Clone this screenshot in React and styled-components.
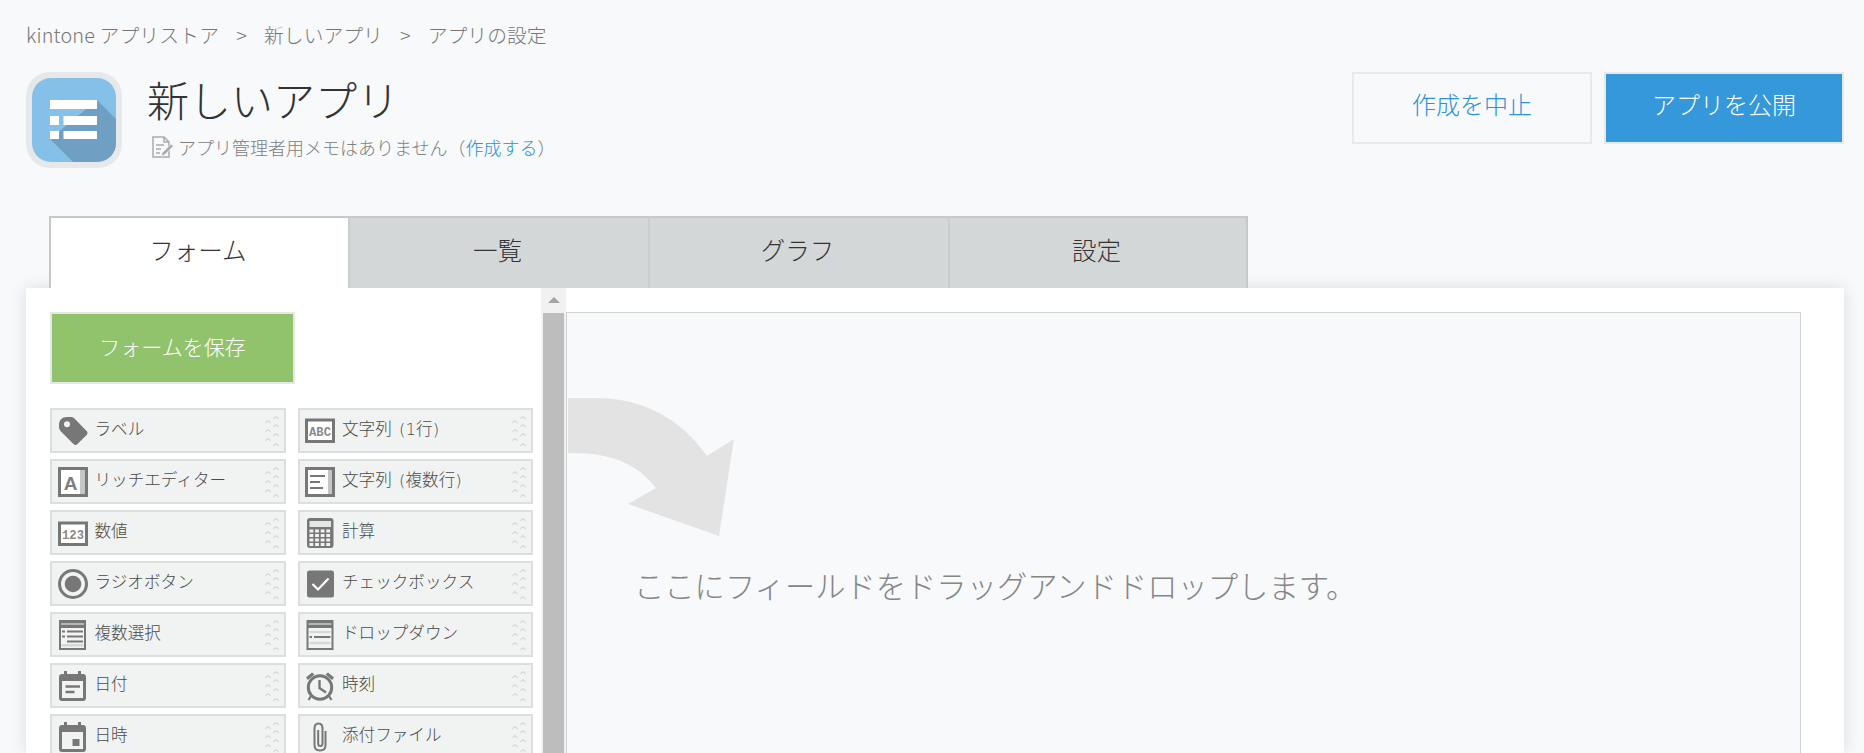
import React from 'react';
import styled, { createGlobalStyle } from 'styled-components';

const GlobalStyle = createGlobalStyle`
  html, body {
    margin: 0;
    height: 100%;
    overflow: hidden;
    background: #f7f9fb;
  }
  body {
    font-family: "Noto Sans CJK JP", "Noto Sans", sans-serif;
    font-weight: 300;
    color: #333;
  }
  * {
    box-sizing: border-box;
  }
`;

const Page = styled.div`
  height: 753px;
  overflow: hidden;
  padding: 21px 20px 0 26px;
  display: flex;
  flex-direction: column;
`;

const Breadcrumb = styled.div`
  display: flex;
  align-items: center;
  height: 28px;
  font-size: 19.8px;
  line-height: 28px;
  color: #777;
`;

const Crumb = styled.span`
  letter-spacing: ${(props) => (props.first ? '0.15px' : '0')};
`;

const Separator = styled.span`
  width: 45px;
  text-align: center;
  font-size: 19.8px;
`;

const Header = styled.header`
  display: flex;
  align-items: flex-start;
  height: 96px;
  margin-top: 23px;
`;

const AppIconFrame = styled.div`
  width: 96px;
  height: 96px;
  flex: none;
  padding: 6px;
  background: #e6e8e9;
  border-radius: 24px;
`;

const AppIconImage = styled.svg`
  display: block;
  width: 84px;
  height: 84px;
  border-radius: 19px;
`;

const TitleBlock = styled.div`
  margin-left: 25px;
  flex: 1;
`;

const Title = styled.h1`
  margin: 0;
  height: 54px;
  font-size: 42px;
  line-height: 54px;
  font-weight: 300;
  color: #333;
`;

const Memo = styled.div`
  display: flex;
  align-items: center;
  height: 24px;
  margin-top: 9px;
  margin-left: 5px;
  font-size: 18px;
  line-height: 24px;
  color: #808080;
`;

const MemoIcon = styled.svg`
  width: 22px;
  height: 22px;
  margin-right: 4px;
  flex: none;
`;

const MemoLink = styled.a`
  color: #2f91d6;
`;

const Actions = styled.div`
  display: flex;
  gap: 12px;
`;

const ActionButton = styled.button`
  width: 240px;
  height: 72px;
  padding: 0 0 9px;
  border: 2px solid #e6e9ea;
  font-family: inherit;
  font-weight: 300;
  font-size: 24px;
  color: ${(props) => (props.primary ? '#fff' : '#2f91d6')};
  background: ${(props) => (props.primary ? '#3498db' : '#f7f9fb')};
`;

const Tabs = styled.nav`
  display: flex;
  position: relative;
  z-index: 1;
  height: 72px;
  margin-top: 48px;
  padding-left: 23px;
`;

const Tab = styled.div`
  width: ${(props) => (props.active ? '299px' : '300px')};
  height: 72px;
  display: flex;
  align-items: center;
  justify-content: center;
  padding: 0 3px 7px 0;
  font-size: 24.5px;
  color: #333;
  border-top: 2px solid #c5c9ca;
  border-left: 2px solid ${(props) => (props.active ? '#c5c9ca' : '#c9cdce')};
  border-right: ${(props) => (props.last ? '2px solid #c5c9ca' : 'none')};
  background: ${(props) => (props.active ? '#fff' : '#d3d7d8')};
`;

const Panel = styled.main`
  flex: 1;
  min-height: 0;
  display: flex;
  overflow: hidden;
  background: #fff;
  box-shadow: 0 0 16px rgba(0, 0, 0, 0.12);
`;

const Sidebar = styled.aside`
  width: 515px;
  flex: none;
  padding: 24px 0 0 24px;
`;

const SaveButton = styled.button`
  display: block;
  width: 245px;
  height: 72px;
  padding: 0 0 4px;
  border: 2px solid #e3e7e8;
  background: #91c36c;
  color: #fff;
  font-family: inherit;
  font-weight: 300;
  font-size: 21px;
`;

const FieldGrid = styled.div`
  display: grid;
  grid-template-columns: 235.5px 235.5px;
  grid-auto-rows: 45px;
  column-gap: 12px;
  row-gap: 6px;
  margin-top: 24px;
`;

const Field = styled.div`
  display: flex;
  align-items: center;
  padding: 0 5px 0 5.5px;
  border: 2px solid #dcdfdf;
  background: #f1f3f2;
`;

const FieldIcon = styled.svg`
  width: 30px;
  height: 30px;
  flex: none;
  margin-right: 7px;
  overflow: visible;
`;

const FieldName = styled.span`
  flex: 1;
  padding-bottom: 2px;
  font-family: "DejaVu Sans", "Noto Sans CJK JP", sans-serif;
  font-size: 16.6px;
  line-height: 24px;
  word-spacing: 2px;
  color: #4a4a4a;
  white-space: nowrap;
`;

const GripIcon = styled.svg`
  width: 14px;
  height: 33px;
  flex: none;
`;

const Scrollbar = styled.div`
  width: 25px;
  flex: none;
  display: flex;
  flex-direction: column;
  background: #f1f1f1;
`;

const ScrollUp = styled.div`
  height: 24px;
  flex: none;
  display: flex;
  align-items: center;
  justify-content: center;
  &::before {
    content: '';
    border-left: 6px solid transparent;
    border-right: 6px solid transparent;
    border-bottom: 6px solid #a3a3a3;
  }
`;

const ScrollThumb = styled.div`
  flex: 1;
  margin: 1px 2px 0;
  background: #bdbdbd;
`;

const DropColumn = styled.div`
  flex: 1;
  min-width: 0;
  padding: 24px 43px 0 0;
`;

const DropArea = styled.section`
  height: 100%;
  border: 1px solid #d0d4d5;
  border-bottom: none;
  background: #f7f9fb;
  padding: 85px 0 0 1px;
`;

const DropArrow = styled.svg`
  display: block;
  width: 170px;
  height: 142px;
`;

const DropHint = styled.p`
  margin: 25px 0 0 66px;
  font-size: 30.3px;
  line-height: 40px;
  color: #858585;
  white-space: nowrap;
`;

const GRAY = '#777';

const icons = {
  label: (
    <path
      fill={GRAY}
      fillRule="evenodd"
      d="M1 9C1 4 4 1 9 1L13 1C14.5 1 15.5 1.6 16.5 2.6L28.6 15C29.8 16.2 29.8 17.8 28.6 19L19.5 28C18.3 29.2 16.7 29.2 15.5 28L3 15.5C1.8 14.2 1 12.5 1 11ZM9 5.2A3 3 0 1 0 9 11.2A3 3 0 1 0 9 5.2Z"
    />
  ),
  richText: (
    <>
      <rect x="1.5" y="1.5" width="27" height="27" fill="#fff" stroke={GRAY} strokeWidth="3" />
      <rect x="22" y="3" width="5" height="24" fill="#c4c6c6" />
      <text x="12.5" y="22.5" textAnchor="middle" fontFamily="Liberation Sans" fontWeight="700" fontSize="19" fill="#808080">A</text>
    </>
  ),
  text: (
    <>
      <rect x="1.5" y="4" width="27" height="21.5" fill="#fff" stroke={GRAY} strokeWidth="3" />
      <text x="15" y="20" textAnchor="middle" fontFamily="Liberation Mono" fontWeight="700" fontSize="13" textLength="22" lengthAdjust="spacingAndGlyphs" fill="#8a8a8a">ABC</text>
    </>
  ),
  multiline: (
    <>
      <rect x="1.5" y="1.5" width="27" height="27" fill="#fff" stroke={GRAY} strokeWidth="3" />
      <rect x="23" y="3" width="4" height="24" fill="#c4c6c6" />
      <path d="M5 9H20M5 15H15M5 21H18" stroke={GRAY} strokeWidth="2.2" />
    </>
  ),
  number: (
    <>
      <rect x="1.5" y="5" width="27" height="21.5" fill="#fff" stroke={GRAY} strokeWidth="3" />
      <text x="15" y="21" textAnchor="middle" fontFamily="Liberation Mono" fontWeight="700" fontSize="13" textLength="22" lengthAdjust="spacingAndGlyphs" fill="#8a8a8a">123</text>
    </>
  ),
  calc: (
    <>
      <rect x="2" y="0" width="26.5" height="30" rx="3" fill={GRAY} />
      <rect x="4.5" y="3" width="21.5" height="6" fill="#e4e6e5" />
      {[0, 1, 2, 3].map((row) =>
        [0, 1, 2, 3].map((col) => (
          <rect key={`${row}-${col}`} x={4.5 + col * 5.6} y={11.5 + row * 4.5} width="3.8" height="3" fill="#f1f3f2" />
        ))
      )}
    </>
  ),
  radio: (
    <>
      <circle cx="15" cy="15" r="13.5" fill="#f1f3f2" stroke={GRAY} strokeWidth="3" />
      <circle cx="15" cy="15" r="8.3" fill={GRAY} />
    </>
  ),
  check: (
    <>
      <rect x="2" y="1.5" width="27" height="27" rx="2.5" fill={GRAY} />
      <path d="M7.5 15L13 20.5L23.5 9.5" fill="none" stroke="#fff" strokeWidth="2.2" />
    </>
  ),
  multiSelect: (
    <>
      <rect x="1" y="0" width="27" height="30" fill={GRAY} />
      <rect x="3" y="3" width="23" height="2" fill="#b5b6b6" />
      <rect x="3" y="8" width="23" height="20" fill="#f2f3f3" />
      <path d="M9 11.5H25M9 16.5H25M9 21.5H25" stroke={GRAY} strokeWidth="2" />
      <path d="M4 11.5H7M4 16.5H7" stroke={GRAY} strokeWidth="2" />
      <rect x="3.5" y="24" width="22" height="2.5" fill="#d5d6d6" />
    </>
  ),
  dropdown: (
    <>
      <rect x="1.5" y="0" width="27" height="30" fill={GRAY} />
      <rect x="3.5" y="3" width="23" height="2" fill="#b5b6b6" />
      <rect x="3.5" y="8" width="23" height="20" fill="#f2f3f3" />
      <path d="M4.5 12H25.5" stroke="#d5d6d6" strokeWidth="2" />
      <path d="M9 17H25.5" stroke={GRAY} strokeWidth="2" />
      <path d="M4.5 17H7" stroke={GRAY} strokeWidth="2" />
      <path d="M4.5 23H25.5" stroke="#d5d6d6" strokeWidth="2.5" />
    </>
  ),
  date: (
    <>
      <path d="M4 3H6V0H9V3H20V0H23V3H25C27 3 28 4 28 6V27C28 29 27 30 25 30H4C2 30 1 29 1 27V6C1 4 2 3 4 3Z" fill={GRAY} />
      <rect x="4" y="10" width="21" height="17" fill="#f1f3f2" />
      <path d="M7.5 15.5H22M7.5 21H16.5" stroke={GRAY} strokeWidth="2.4" />
    </>
  ),
  time: (
    <>
      <circle cx="15" cy="16.5" r="11.7" fill="#f1f3f2" stroke={GRAY} strokeWidth="3" />
      <path d="M14.5 9V17L21 21.5" fill="none" stroke={GRAY} strokeWidth="2.4" />
      <path d="M1 6.5L7 1.5L9.5 3.5L3 9ZM29 6.5L23 1.5L20.5 3.5L27 9Z" fill={GRAY} />
      <path d="M6 25L3.5 29M24 25L26.5 29" stroke={GRAY} strokeWidth="2.2" />
    </>
  ),
  datetime: (
    <>
      <path d="M4 3H6V0H9V3H20V0H23V3H25C27 3 28 4 28 6V27C28 29 27 30 25 30H4C2 30 1 29 1 27V6C1 4 2 3 4 3Z" fill={GRAY} />
      <rect x="4" y="10" width="21" height="17" fill="#f1f3f2" />
      <rect x="14.5" y="17" width="7" height="7" fill={GRAY} />
    </>
  ),
  attachment: (
    <path
      d="M20.5 9V23C20.5 26.5 18.5 28.5 15 28.5C11.5 28.5 9.5 26.5 9.5 23V6.5C9.5 3.5 11 1.5 13.5 1.5C16 1.5 17.5 3.5 17.5 6.5V21.5C17.5 23.3 16.5 24 15.3 24C14 24 13.2 23.3 13.2 21.5V8"
      fill="none"
      stroke={GRAY}
      strokeWidth="2"
    />
  ),
};

const fields = [
  ['label', 'ラベル'],
  ['text', '文字列 (1行)'],
  ['richText', 'リッチエディター'],
  ['multiline', '文字列 (複数行)'],
  ['number', '数値'],
  ['calc', '計算'],
  ['radio', 'ラジオボタン'],
  ['check', 'チェックボックス'],
  ['multiSelect', '複数選択'],
  ['dropdown', 'ドロップダウン'],
  ['date', '日付'],
  ['time', '時刻'],
  ['datetime', '日時'],
  ['attachment', '添付ファイル'],
];

function Grip() {
  const right = [3, 11, 20, 30];
  const left = [7, 16, 25];
  const arch = (x, y) => `M${x} ${y + 2.2}V${y + 1.4}Q${x} ${y} ${x + 2} ${y}Q${x + 4} ${y} ${x + 4} ${y + 1.4}V${y + 2.2}`;
  return (
    <GripIcon viewBox="0 0 14 33">
      {left.map((y) => (
        <path key={`l${y}`} d={arch(1, y)} fill="none" stroke="#ccc" strokeWidth="1" />
      ))}
      {right.map((y) => (
        <path key={`r${y}`} d={arch(9, y)} fill="none" stroke="#ccc" strokeWidth="1" />
      ))}
    </GripIcon>
  );
}

function App() {
  return (
    <Page>
      <GlobalStyle />
      <Breadcrumb>
        <Crumb first>kintone アプリストア</Crumb>
        <Separator>&gt;</Separator>
        <Crumb>新しいアプリ</Crumb>
        <Separator>&gt;</Separator>
        <Crumb>アプリの設定</Crumb>
      </Breadcrumb>
      <Header>
        <AppIconFrame>
          <AppIconImage viewBox="0 0 84 84">
            <rect width="84" height="84" fill="#85c0e8" />
            <path d="M65 22L84 41V84H41L18 61Z" fill="#6fa0c4" />
            <path d="M18 22H65V31H18ZM18 38H27V47H18ZM31.500 38H65V47H31.500ZM18 53H27V61H18ZM31.500 53H65V61H31.500Z" fill="#fff" />
          </AppIconImage>
        </AppIconFrame>
        <TitleBlock>
          <Title>新しいアプリ</Title>
          <Memo>
            <MemoIcon viewBox="0 0 22 22">
              <path d="M1 1H12L17 6V21H1Z" fill="none" stroke="#aaa" strokeWidth="1.5" />
              <path d="M12 1V6H17M4 9H12M4 13H9M4 17H8" fill="none" stroke="#aaa" strokeWidth="1.5" />
              <path d="M10 17L19 8L21.500 10L12.500 19L9.500 20Z" fill="#aaa" stroke="#f7f9fb" strokeWidth="0.8" />
            </MemoIcon>
            アプリ管理者用メモはありません（<MemoLink>作成する</MemoLink>）
          </Memo>
        </TitleBlock>
        <Actions>
          <ActionButton>作成を中止</ActionButton>
          <ActionButton primary>アプリを公開</ActionButton>
        </Actions>
      </Header>
      <Tabs>
        <Tab active>フォーム</Tab>
        <Tab>一覧</Tab>
        <Tab>グラフ</Tab>
        <Tab last>設定</Tab>
      </Tabs>
      <Panel>
        <Sidebar>
          <SaveButton>フォームを保存</SaveButton>
          <FieldGrid>
            {fields.map(([icon, name]) => (
              <Field key={name}>
                <FieldIcon viewBox="0 0 30 30">{icons[icon]}</FieldIcon>
                <FieldName>{name}</FieldName>
                <Grip />
              </Field>
            ))}
          </FieldGrid>
        </Sidebar>
        <Scrollbar>
          <ScrollUp />
          <ScrollThumb />
        </Scrollbar>
        <DropColumn>
          <DropArea>
            <DropArrow viewBox="0 0 170 142">
              <path
                d="M0 0H28C76 0 114 22 139 58L166 41L151 138L60 106L88 90C70 66 42 54 0 55Z"
                fill="#e3e3e3"
              />
            </DropArrow>
            <DropHint>ここにフィールドをドラッグアンドドロップします。</DropHint>
          </DropArea>
        </DropColumn>
      </Panel>
    </Page>
  );
}

export default App;
